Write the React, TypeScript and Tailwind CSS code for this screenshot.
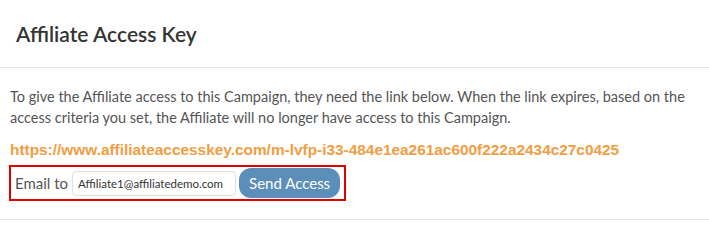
export default function App() {
  return (
    <div className="w-[709px] h-[221px] bg-white font-['Source_Sans_Pro','Lato','Noto_Sans',sans-serif] text-[#555]">
      <div className="h-[68px] flex items-center pl-4 border-b border-[#e3e3e3]">
        <h2 className="text-[21px] font-semibold text-[#333]">Affiliate Access Key</h2>
      </div>
      <div className="pl-[10px] pr-4 pt-[18px] pb-[18px] border-b border-[#e8e8e8]">
        <p className="text-[14.5px] leading-[21px]">
          To give the Affiliate access to this Campaign, they need the link below. When the link expires, based on the
          access criteria you set, the Affiliate will no longer have access to this Campaign.
        </p>
        <p className="mt-[12px] font-['Liberation_Sans',Arial,sans-serif] font-bold text-[15.4px] leading-[20px] text-[#f29d43]">
          https://www.affiliateaccesskey.com/m-lvfp-i33-484e1ea261ac600f222a2434c27c0425
        </p>
        <div className="mt-[5px] -ml-[1px] inline-flex items-center gap-[3px] border-2 border-[#e00000] pl-[4px] pr-[4px] py-[1px]">
          <span className="text-[15px] mr-[1px]">Email to</span>
          <input
            className="w-[164px] h-[25px] border border-[#e0e0e0] rounded-[4px] px-[5px] text-[11.5px] text-[#333] outline-none"
            defaultValue="Affiliate1@affiliatedemo.com"
          />
          <button className="h-[30px] px-[10px] rounded-[12px] bg-[#5b8fb9] text-white text-[15px] leading-none">
            Send Access
          </button>
        </div>
      </div>
    </div>
  );
}
